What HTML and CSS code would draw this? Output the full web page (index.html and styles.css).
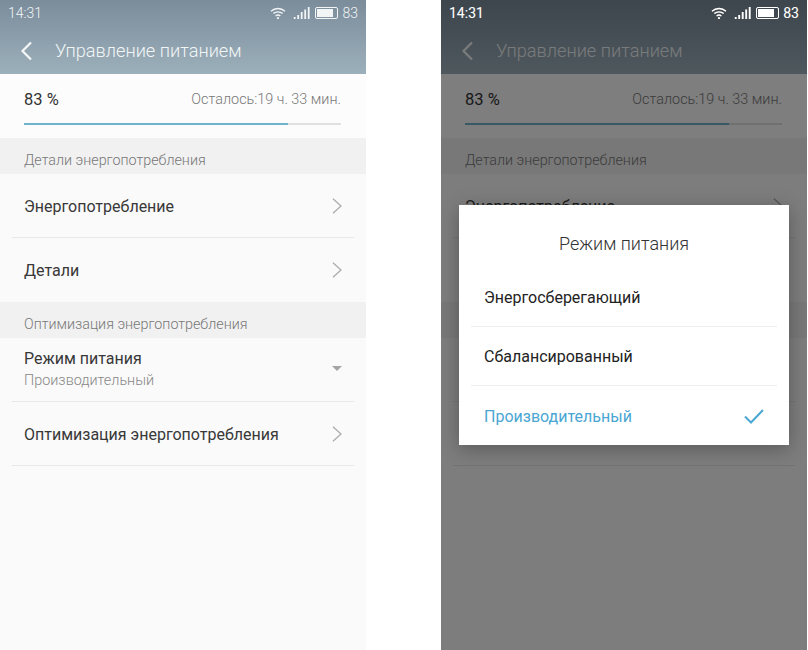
FILE: index.html
```html
<!DOCTYPE html>
<html lang="ru">
<head>
<meta charset="utf-8">
<title>Управление питанием</title>
<link rel="stylesheet" href="styles.css">
</head>
<body>
<svg class="defs" width="0" height="0" aria-hidden="true">
  <symbol id="wifi" viewBox="0 0 16 12"><path d="M1 4.2C5 .6 11 .6 15 4.2M3.3 6.6C6 4.2 10 4.2 12.7 6.6M5.6 8.9C7 7.8 9 7.8 10.4 8.9" fill="none" stroke="currentColor" stroke-width="1.3"/><circle cx="8" cy="11" r="1.1" fill="currentColor"/></symbol>
  <symbol id="signal" viewBox="0 0 17 12"><path d="M.8 10h1.800v2H.8zM4.300 8h1.800v4H4.300zM7.800 5h1.800v7H7.800zM11.300 2.500h1.800V12h-1.800zM14.800 0h1.800v12h-1.800z" fill="currentColor"/></symbol>
  <symbol id="chev" viewBox="0 0 10 16"><path d="M1 .8 9 8 1 15.200" fill="none" stroke="currentColor" stroke-width="1.200"/></symbol>
</svg>

<section class="phone">
  <div class="screen">
    <header class="appbar">
      <div class="status">
        <span>14:31</span>
        <div class="status-icons">
          <svg class="ic-wifi"><use href="#wifi"/></svg>
          <svg class="ic-signal"><use href="#signal"/></svg>
          <span class="battery"><i class="battery-fill"></i></span>
          <span>83</span>
        </div>
      </div>
      <div class="titlebar">
        <svg class="back" viewBox="0 0 13 20"><path d="M11 1.500 2.500 10 11 18.500" fill="none" stroke="currentColor" stroke-width="2.200"/></svg>
        <h1 class="title">Управление питанием</h1>
      </div>
    </header>
    <div class="summary">
      <div class="summary-line"><span class="pct">83 %</span><span class="left">Осталось:19 ч. 33 мин.</span></div>
      <div class="bar"><div class="bar-fill"></div></div>
    </div>
    <div class="section">Детали энергопотребления</div>
    <div class="row"><span class="row-label">Энергопотребление</span><svg class="chev"><use href="#chev"/></svg></div>
    <div class="row row-last"><span class="row-label">Детали</span><svg class="chev"><use href="#chev"/></svg></div>
    <div class="section">Оптимизация энергопотребления</div>
    <div class="row"><div class="stack"><span class="row-label">Режим питания</span><span class="row-sub">Производительный</span></div><i class="caret"></i></div>
    <div class="row"><span class="row-label">Оптимизация энергопотребления</span><svg class="chev"><use href="#chev"/></svg></div>
  </div>
</section>

<section class="phone">
  <div class="screen">
    <header class="appbar">
      <div class="status">
        <span>14:31</span>
        <div class="status-icons">
          <svg class="ic-wifi"><use href="#wifi"/></svg>
          <svg class="ic-signal"><use href="#signal"/></svg>
          <span class="battery"><i class="battery-fill"></i></span>
          <span>83</span>
        </div>
      </div>
      <div class="titlebar">
        <svg class="back" viewBox="0 0 13 20"><path d="M11 1.500 2.500 10 11 18.500" fill="none" stroke="currentColor" stroke-width="2.200"/></svg>
        <h1 class="title">Управление питанием</h1>
      </div>
    </header>
    <div class="summary">
      <div class="summary-line"><span class="pct">83 %</span><span class="left">Осталось:19 ч. 33 мин.</span></div>
      <div class="bar"><div class="bar-fill"></div></div>
    </div>
    <div class="section">Детали энергопотребления</div>
    <div class="row"><span class="row-label">Энергопотребление</span><svg class="chev"><use href="#chev"/></svg></div>
    <div class="row row-last"><span class="row-label">Детали</span><svg class="chev"><use href="#chev"/></svg></div>
    <div class="section">Оптимизация энергопотребления</div>
    <div class="row"><div class="stack"><span class="row-label">Режим питания</span><span class="row-sub">Производительный</span></div><i class="caret"></i></div>
    <div class="row"><span class="row-label">Оптимизация энергопотребления</span><svg class="chev"><use href="#chev"/></svg></div>
  </div>
  <div class="scrim"></div>
  <div class="status status-top">
    <span>14:31</span>
    <div class="status-icons">
      <svg class="ic-wifi"><use href="#wifi"/></svg>
      <svg class="ic-signal"><use href="#signal"/></svg>
      <span class="battery"><i class="battery-fill"></i></span>
      <span>83</span>
    </div>
  </div>
  <div class="dialog">
    <h2 class="dialog-title">Режим питания</h2>
    <div class="option">Энергосберегающий</div>
    <div class="option">Сбалансированный</div>
    <div class="option option-on">Производительный
      <svg class="check" viewBox="0 0 20 15"><path d="M1 7.500 7 13.500 19 1" fill="none" stroke="currentColor" stroke-width="2"/></svg>
    </div>
  </div>
</section>
</body>
</html>
```

FILE: styles.css
```css
* { box-sizing: border-box; }
html, body { height: 100%; }
body {
  margin: 0;
  background: #fff;
  display: flex;
  gap: 75px;
  font-family: Roboto, "Noto Sans", sans-serif;
  overflow: hidden;
}
.defs { position: absolute; }
.phone {
  position: relative;
  width: 366px;
  height: 650px;
  flex: none;
  overflow: hidden;
}
.screen { height: 100%; background: #fafafa; }
.appbar {
  height: 74px;
  color: #fff;
  background: linear-gradient(#7b8c9b, #9cb0bb);
}
.status {
  height: 25px;
  padding: 1px 8px 0;
  display: flex;
  justify-content: space-between;
  align-items: center;
  font-size: 14px;
  font-weight: 300;
  color: #f2f5f6;
}
.status-top {
  position: absolute;
  inset: 0 0 auto 0;
  font-weight: 400;
  color: #fff;
}
.status-icons { display: flex; align-items: center; }
.ic-wifi { width: 16px; height: 12px; margin-right: 7px; }
.ic-signal { width: 17px; height: 12px; margin-right: 5px; }
.battery {
  width: 23px;
  height: 12px;
  border: 1.500px solid currentColor;
  border-radius: 2px;
  padding: 1px;
  margin-right: 4px;
  display: flex;
}
.battery-fill { width: 83%; background: currentColor; }
.titlebar {
  height: 49px;
  display: flex;
  align-items: center;
  padding: 2px 0 0 20px;
}
.back { width: 13px; height: 20px; margin-right: 22px; color: #f4f6f7; }
.title {
  margin: 0;
  font-size: 18.200px;
  font-weight: 300;
  color: #f2f5f6;
}
.summary { height: 64px; background: #fcfcfc; padding: 0 25px 0 24px; }
.summary-line {
  height: 49px;
  padding-top: 2px;
  display: flex;
  justify-content: space-between;
  align-items: center;
}
.pct { font-size: 16.500px; color: #333; }
.left { font-size: 14.400px; font-weight: 300; color: #777; }
.bar { height: 2px; background: #e0e0e0; }
.bar-fill { width: 83.300%; height: 100%; background: #6fb3cb; }
.section {
  height: 36px;
  padding: 14px 24px 0;
  background: #f1f1f1;
  font-size: 14.300px;
  line-height: 17px;
  font-weight: 300;
  color: #777;
}
.row {
  height: 64px;
  margin: 0 12px;
  padding: 1px 12px 0;
  display: flex;
  justify-content: space-between;
  align-items: center;
  border-bottom: 1px solid #e8e8e8;
}
.row-last { border-bottom: 0; padding-top: 0; }
.row-label { font-size: 16px; color: #383838; }
.stack { display: flex; flex-direction: column; gap: 4px; margin-top: -2px; }
.row-sub { font-size: 14.400px; font-weight: 300; color: #888; }
.chev { width: 10px; height: 16px; color: #a9a9a9; }
.caret {
  width: 0;
  height: 0;
  margin: 0 0 3px;
  border: 5px solid transparent;
  border-top: 5px solid #a5a5a5;
  border-bottom: 0;
}
.scrim { position: absolute; inset: 0; background: rgba(0, 0, 0, .5); }
.dialog {
  position: absolute;
  left: 18px;
  top: 205px;
  width: 330px;
  height: 240px;
  padding: 0 12px;
  background: #fff;
  box-shadow: 0 4px 18px rgba(0, 0, 0, .28);
}
.dialog-title {
  margin: 0;
  height: 63px;
  padding-top: 14px;
  display: flex;
  align-items: center;
  justify-content: center;
  font-size: 18px;
  font-weight: 300;
  color: #333;
}
.option {
  height: 59px;
  padding: 1px 13px 0;
  display: flex;
  justify-content: space-between;
  align-items: center;
  font-size: 16px;
  color: #222;
  border-bottom: 1px solid #eee;
}
.option-on { color: #4aa6d2; border-bottom: 0; padding-top: 2px; }
.check { width: 20px; height: 15px; }
```
